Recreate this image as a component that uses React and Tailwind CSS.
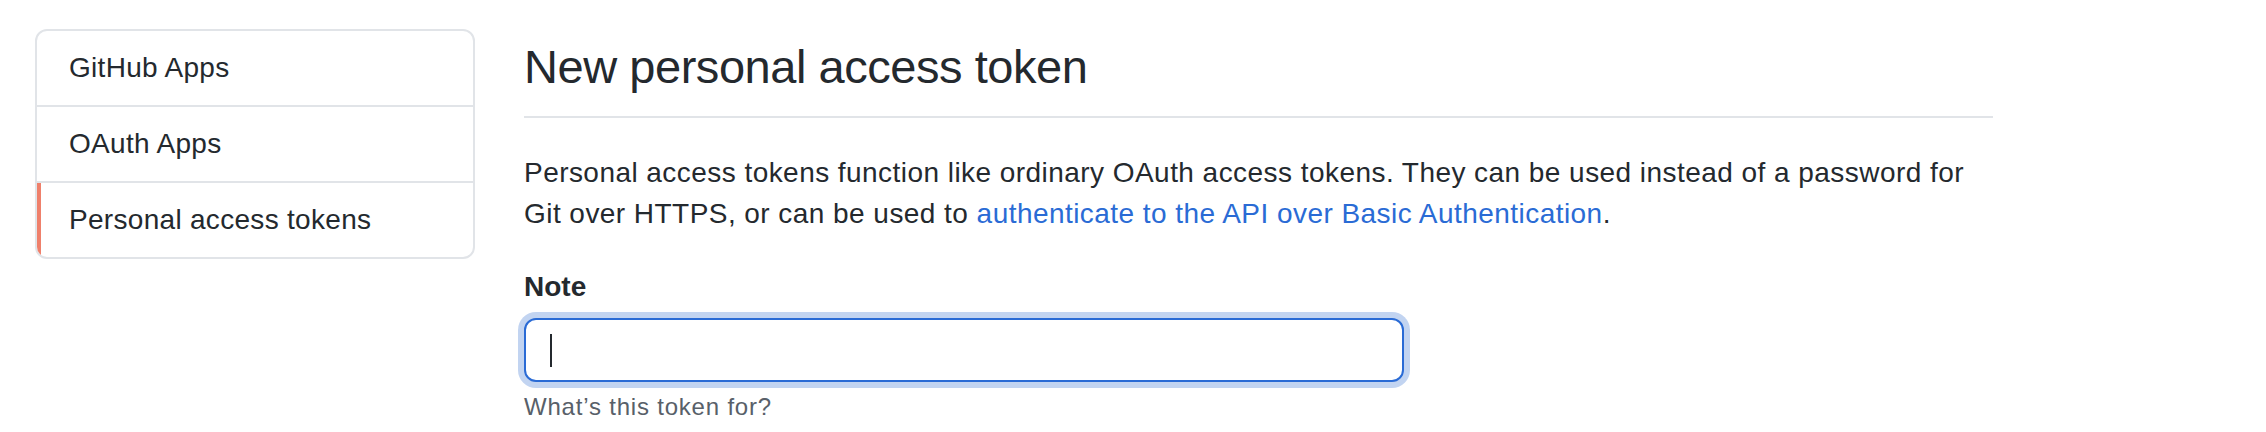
export default function App() {
  const items = ["GitHub Apps", "OAuth Apps", "Personal access tokens"];
  return (
    <div className="flex items-start gap-[49px] pl-[35px] pt-[29px] w-[2266px] min-h-[432px] bg-white text-[#24292e] font-['Liberation_Sans',Arial,sans-serif]">
      <nav className="w-[440px] shrink-0 border-2 border-[#e1e4e8] rounded-[12px] overflow-hidden">
        {items.map((label, i) => {
          const selected = i === items.length - 1;
          return (
            <a
              key={label}
              href="#"
              className={
                selected
                  ? "relative block px-[32px] py-[16px] text-[28px] leading-[42px] tracking-[0.3px] text-[#24292e]"
                  : "relative block px-[32px] py-[16px] text-[28px] leading-[42px] tracking-[0.3px] text-[#24292e] border-b-2 border-[#e1e4e8]"
              }
            >
              {selected && (
                <span className="absolute left-0 top-0 bottom-0 w-[4px] bg-[#ef806b]" />
              )}
              {label}
            </a>
          );
        })}
      </nav>

      <main className="w-[1469px]">
        <div className="pt-[8px] pb-[19px] border-b-2 border-[#e1e4e8]">
          <h2 className="text-[47px] leading-[60px] font-normal tracking-[-0.45px]">
            New personal access token
          </h2>
        </div>

        <p className="mt-[34px] text-[28px] leading-[41px] tracking-[0.45px] whitespace-nowrap">
          Personal access tokens function like ordinary OAuth access tokens. They can be used instead of a password for
          <br />
          Git over HTTPS, or can be used to{" "}
          <a href="#" className="text-[#2a6bd5]">
            authenticate to the API over Basic Authentication
          </a>
          .
        </p>

        <div className="mt-[32px] text-[28px] leading-[42px] font-bold">Note</div>

        <div className="mt-[10px] w-[880px] h-[64px] border-2 border-[#2a6bd5] rounded-[12px] shadow-[0_0_0_6px_#c2d4f1] flex items-center pl-[24px] bg-white">
          <span className="block w-[2px] h-[33px] bg-[#24292e]" />
        </div>

        <p className="mt-[7px] text-[24px] leading-[36px] tracking-[0.8px] text-[#586069]">
          What’s this token for?
        </p>
      </main>
    </div>
  );
}
